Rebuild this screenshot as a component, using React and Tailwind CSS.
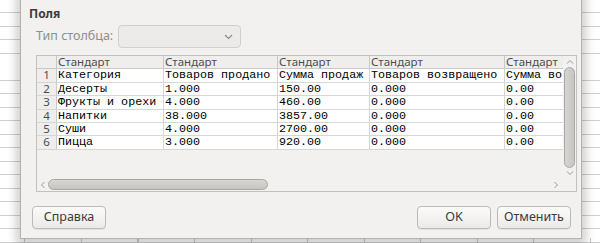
import React from "react";

const cols = [
  { w: "w-[107px]", head: "Стандарт" },
  { w: "w-[114px]", head: "Стандарт" },
  { w: "w-[92px]", head: "Стандарт" },
  { w: "w-[135px]", head: "Стандарт" },
  { w: "w-[78px]", head: "Стандарт" },
];

const rows = [
  ["Категория", "Товаров продано", "Сумма продаж", "Товаров возвращено", "Сумма во"],
  ["Десерты", "1.000", "150.00", "0.000", "0.00"],
  ["Фрукты и орехи", "4.000", "460.00", "0.000", "0.00"],
  ["Напитки", "38.000", "3857.00", "0.000", "0.00"],
  ["Суши", "4.000", "2700.00", "0.000", "0.00"],
  ["Пицца", "3.000", "920.00", "0.000", "0.00"],
];

const rowH = ["h-[14px]", "h-[13px]", "h-[14px]", "h-[13px]", "h-[13px]", "h-[14px]"];

function Button({ children, className }) {
  return (
    <button
      className={
        "h-[23px] rounded-[4px] border border-[#bcbab6] bg-gradient-to-b from-[#fbfbfa] to-[#ebeae8] text-[12.5px] text-[#3c3c3c] shadow-[0_1px_0_rgba(0,0,0,0.06)] " +
        className
      }
    >
      {children}
    </button>
  );
}

export default function App() {
  return (
    <div
      className="relative w-[600px] h-[243px] overflow-hidden bg-white bg-[repeating-linear-gradient(to_bottom,transparent_0px,transparent_12.5px,#cfcfcf_12.5px,#cfcfcf_13.5px)]"
      style={{ fontFamily: '"Noto Sans", "Open Sans", sans-serif' }}
    >
      {/* column lines of the sheet under the dialog */}
      <div className="absolute left-0 right-0 top-[238px] h-[6px] bg-[repeating-linear-gradient(to_right,transparent_0px,transparent_24.5px,#c8c8c8_24.5px,#c8c8c8_25.5px,transparent_25.5px,transparent_56.5px)]" />

      {/* dialog */}
      <div className="absolute left-[20px] top-[-4px] w-[562px] h-[243px] bg-[#f2f1f0] border border-[#b5b3ae] shadow-[0_2px_9px_4px_rgba(0,0,0,0.2)] flex flex-col">
        <div className="pl-[8px] pt-[10px] text-[12px] font-bold text-[#3c3c3c] leading-[14px]">Поля</div>

        <div className="flex items-center mt-[4px] pl-[15px] h-[23px]">
          <span className="text-[12.5px] text-[#8f8e8b] w-[82px]">Тип столбца:</span>
          <div className="w-[123px] h-[23px] rounded-[4px] border border-[#d2d0cc] bg-[#ecebe9] flex items-center justify-end pr-[7px]">
            <svg width="9" height="6" viewBox="0 0 9 6">
              <path d="M1 1 L4.5 4.5 L8 1" fill="none" stroke="#8c8b88" strokeWidth="1.2" />
            </svg>
          </div>
        </div>

        {/* table frame */}
        <div className="ml-[15px] mt-[7px] w-[541px] h-[137px] border border-[#c2c0bc] flex flex-col">
          <div className="flex h-[122px]">
            <div className="w-[526px] overflow-hidden flex flex-col">
              <div className="flex h-[13px] bg-[#efeeec] border-b border-[#c9c9c9]">
                <div className="w-[20px] shrink-0 border-r border-[#c9c9c9]" />
                {cols.map((c, i) => (
                  <div
                    key={i}
                    className={c.w + " shrink-0 border-r border-[#c9c9c9] pl-[1px] text-[11.5px] leading-[12px] text-[#4d4d4d] whitespace-nowrap overflow-hidden"}
                  >
                    {c.head}
                  </div>
                ))}
              </div>
              {rows.map((r, ri) => (
                <div key={ri} className={rowH[ri] + " flex border-b border-[#d6d6d6] bg-white"}>
                  <div className="w-[20px] shrink-0 bg-[#efeeec] border-r border-[#c9c9c9] text-center text-[11.5px] leading-[12px] text-[#4d4d4d]">
                    {ri + 1}
                  </div>
                  {r.map((v, ci) => (
                    <div
                      key={ci}
                      className={cols[ci].w + " shrink-0 border-r border-[#d6d6d6] pl-[1px] text-[11.7px] leading-[12px] text-black whitespace-nowrap overflow-hidden"}
                      style={{ fontFamily: '"Liberation Mono", monospace' }}
                    >
                      {v}
                    </div>
                  ))}
                </div>
              ))}
            </div>
            {/* vertical scrollbar */}
            <div className="w-[13px] flex flex-col items-center">
              <svg width="8" height="6" viewBox="0 0 8 6" className="mt-[3px]">
                <path d="M1 4.5 L4 1.5 L7 4.5" fill="none" stroke="#9a9894" strokeWidth="1" />
              </svg>
              <div className="mt-[2px] w-[11px] h-[101px] rounded-[6px] border border-[#a9a7a3] bg-gradient-to-r from-[#d7d5d2] to-[#c8c6c2]" />
              <svg width="8" height="6" viewBox="0 0 8 6" className="mt-[2px]">
                <path d="M1 1.5 L4 4.5 L7 1.5" fill="none" stroke="#9a9894" strokeWidth="1" />
              </svg>
            </div>
          </div>
          {/* horizontal scrollbar */}
          <div className="flex h-[13px] items-center">
            <div className="w-[526px] flex items-center">
              <svg width="6" height="8" viewBox="0 0 6 8" className="ml-[3px]">
                <path d="M4.5 1 L1.5 4 L4.5 7" fill="none" stroke="#9a9894" strokeWidth="1" />
              </svg>
              <div className="ml-[2px] w-[220px] h-[11px] rounded-[6px] border border-[#a9a7a3] bg-gradient-to-b from-[#d9d7d4] to-[#c6c4c0]" />
              <div className="flex-1" />
              <svg width="6" height="8" viewBox="0 0 6 8" className="mr-[4px]">
                <path d="M1.5 1 L4.5 4 L1.5 7" fill="none" stroke="#9a9894" strokeWidth="1" />
              </svg>
            </div>
            <div className="w-[13px]" />
          </div>
        </div>

        {/* buttons */}
        <div className="flex mt-[14px] pl-[11px] pr-[10px]">
          <Button className="w-[74px]">Справка</Button>
          <div className="flex-1" />
          <Button className="w-[74px]">OK</Button>
          <Button className="w-[74px] ml-[6px]">Отменить</Button>
        </div>
      </div>
    </div>
  );
}
